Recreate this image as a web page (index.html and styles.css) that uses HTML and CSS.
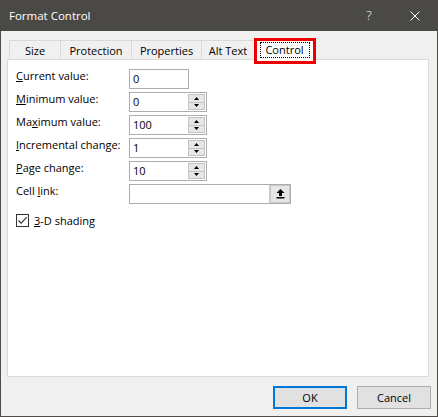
FILE: index.html
```html
<!DOCTYPE html>
<html>
<head>
<meta charset="utf-8">
<title>Format Control</title>
<link rel="stylesheet" href="styles.css">
</head>
<body>
<div class="window">
  <div class="titlebar">
    <span class="title">Format Control</span>
    <span class="capbtn help">?</span>
    <span class="capbtn close">
      <svg width="10" height="10" viewBox="0 0 10 10"><path d="M0.5 0.5L9.5 9.5M9.5 0.5L0.5 9.5" stroke="#fff" stroke-width="1" fill="none"/></svg>
    </span>
  </div>
  <div class="content">
    <div class="tabs">
      <div class="tab t-size">Size</div>
      <div class="tab t-prot">Protection</div>
      <div class="tab t-prop">Properties</div>
      <div class="tab t-alt">Alt Text</div>
      <div class="tab t-ctrl selected"><span class="focus">Control</span></div>
    </div>
    <div class="panel">
      <div class="form">
        <div class="lbl"><u>C</u>urrent value:</div>
        <div class="field f-short"><span class="val">0</span></div>

        <div class="lbl"><u>M</u>inimum value:</div>
        <div class="field f-spin"><span class="val">0</span>
          <span class="spin"><span class="sb"><svg width="5" height="3" viewBox="0 0 5 3"><path d="M2.5 0L5 3H0Z" fill="#000"/></svg></span><span class="sb"><svg width="5" height="3" viewBox="0 0 5 3"><path d="M0 0H5L2.5 3Z" fill="#000"/></svg></span></span>
        </div>

        <div class="lbl">Ma<u>x</u>imum value:</div>
        <div class="field f-spin"><span class="val">100</span>
          <span class="spin"><span class="sb"><svg width="5" height="3" viewBox="0 0 5 3"><path d="M2.5 0L5 3H0Z" fill="#000"/></svg></span><span class="sb"><svg width="5" height="3" viewBox="0 0 5 3"><path d="M0 0H5L2.5 3Z" fill="#000"/></svg></span></span>
        </div>

        <div class="lbl"><u>I</u>ncremental change:</div>
        <div class="field f-spin"><span class="val">1</span>
          <span class="spin"><span class="sb"><svg width="5" height="3" viewBox="0 0 5 3"><path d="M2.5 0L5 3H0Z" fill="#000"/></svg></span><span class="sb"><svg width="5" height="3" viewBox="0 0 5 3"><path d="M0 0H5L2.5 3Z" fill="#000"/></svg></span></span>
        </div>

        <div class="lbl"><u>P</u>age change:</div>
        <div class="field f-spin"><span class="val">10</span>
          <span class="spin"><span class="sb"><svg width="5" height="3" viewBox="0 0 5 3"><path d="M2.5 0L5 3H0Z" fill="#000"/></svg></span><span class="sb"><svg width="5" height="3" viewBox="0 0 5 3"><path d="M0 0H5L2.5 3Z" fill="#000"/></svg></span></span>
        </div>

        <div class="lbl">Cell <u>l</u>ink:</div>
        <div class="field f-link"><span class="val"></span>
          <span class="pick"><svg width="9" height="10" viewBox="0 0 9 10"><path d="M4.5 0L8.5 4H6V7H3V4H0.5Z" fill="#000"/><rect x="0.5" y="8" width="8" height="1.5" fill="#000"/></svg></span>
        </div>
      </div>
      <div class="check">
        <span class="box"><svg width="11" height="11" viewBox="0 0 11 11"><path d="M1.5 5.5L4.2 8.2L9.8 2.2" stroke="#333" stroke-width="1.1" fill="none"/></svg></span>
        <span class="ctext"><u>3</u>-D shading</span>
      </div>
    </div>
    <div class="buttons">
      <div class="btn ok">OK</div>
      <div class="btn cancel">Cancel</div>
    </div>
  </div>
</div>
</body>
</html>
```

FILE: styles.css
```css
html, body {
  margin: 0;
  padding: 0;
  background: #f0f0f0;
}
body {
  font-family: "Open Sans", "Noto Sans", sans-serif;
  font-size: 11px;
  color: #000;
}
.window {
  width: 438px;
  height: 417px;
  box-sizing: border-box;
  border: 1px solid #4f4d4a;
  border-top: 0;
  background: #f0f0f0;
  display: flex;
  flex-direction: column;
}
.titlebar {
  height: 31px;
  margin: 0 -1px;
  background: #4b4946;
  color: #fff;
  display: flex;
  align-items: center;
  padding-left: 9px;
}
.title {
  flex: 1;
  font-size: 11.5px;
  padding-bottom: 1px;
}
.capbtn {
  width: 46px;
  height: 31px;
  display: flex;
  align-items: center;
  justify-content: center;
}
.help {
  font-size: 13px;
  font-weight: 300;
  padding-bottom: 2px;
  box-sizing: border-box;
}
.close {
  margin-right: 0;
}
.content {
  flex: 1;
  display: flex;
  flex-direction: column;
  padding-top: 7px;
}
.tabs {
  display: flex;
  align-items: flex-end;
  margin-left: 8px;
}
.tab {
  box-sizing: border-box;
  height: 19px;
  border-left: 1px solid #d9d9d9;
  border-top: 1px solid #d9d9d9;
  text-align: center;
  line-height: 17px;
  padding-top: 1px;
  white-space: nowrap;
}
.t-size { width: 51px; }
.t-prot { width: 71px; }
.t-prop { width: 70px; }
.t-alt { width: 54px; border-right: 1px solid #d9d9d9; }
.t-ctrl {
  width: 59px;
}
.tab.selected {
  position: relative;
  z-index: 1;
  height: 22px;
  margin-bottom: -1px;
  background: #fff;
  border: 1px solid #d9d9d9;
  border-bottom: 0;
  display: flex;
  justify-content: center;
  align-items: flex-start;
  padding-top: 3px;
  line-height: 14px;
}
.tab.selected::after {
  content: "";
  position: absolute;
  left: -2px;
  top: -1px;
  right: -3px;
  bottom: -4px;
  border: 3px solid #ee0000;
}
.focus {
  display: block;
  box-sizing: border-box;
  width: 50px;
  height: 16px;
  border: 1px dotted #000;
  line-height: 14px;
}
.panel {
  box-sizing: border-box;
  height: 318px;
  margin-left: 6px;
  margin-right: 8px;
  border: 1px solid #d9d9d9;
  background: #fff;
  padding: 9px 0 0 8px;
}
.form {
  display: grid;
  grid-template-columns: 113px auto;
  grid-auto-rows: 20px;
  row-gap: 3px;
  justify-items: start;
}
.lbl {
  line-height: 13px;
  white-space: nowrap;
}
.field {
  box-sizing: border-box;
  height: 20px;
  border: 1px solid #adadad;
  background: #fff;
  display: flex;
}
.f-short { width: 60px; }
.f-spin { width: 78px; }
.f-link { width: 162px; }
.val {
  flex: 1;
  padding-left: 3px;
  line-height: 17px;
}
.spin {
  width: 15px;
  margin: 1px;
  border: 1px solid #c4c4c4;
  display: flex;
  flex-direction: column;
  background: #e6e6e6;
}
.sb {
  flex: 1;
  display: flex;
  align-items: center;
  justify-content: center;
}
.sb + .sb {
  border-top: 1px solid #c4c4c4;
}
.pick {
  width: 18px;
  border-left: 2px solid #c8c8c8;
  border-top: 1px solid #c8c8c8;
  border-bottom: 1px solid #c8c8c8;
  border-right: 1px solid #c8c8c8;
  background: #e6e6e6;
  display: flex;
  align-items: center;
  justify-content: center;
}
.check {
  display: flex;
  align-items: center;
  margin-top: 10px;
  height: 13px;
}
.box {
  box-sizing: border-box;
  width: 13px;
  height: 13px;
  border: 1px solid #333;
  display: flex;
  align-items: center;
  justify-content: center;
  background: #fff;
}
.ctext {
  margin-left: 5px;
  line-height: 13px;
}
.buttons {
  display: flex;
  justify-content: flex-end;
  gap: 10px;
  margin-top: 9px;
  padding-right: 6px;
}
.btn {
  box-sizing: border-box;
  width: 74px;
  height: 23px;
  background: #e1e1e1;
  border: 1px solid #adadad;
  display: flex;
  align-items: center;
  justify-content: center;
  padding-bottom: 1px;
}
.btn.ok {
  border: 2px solid #0078d7;
}
```
